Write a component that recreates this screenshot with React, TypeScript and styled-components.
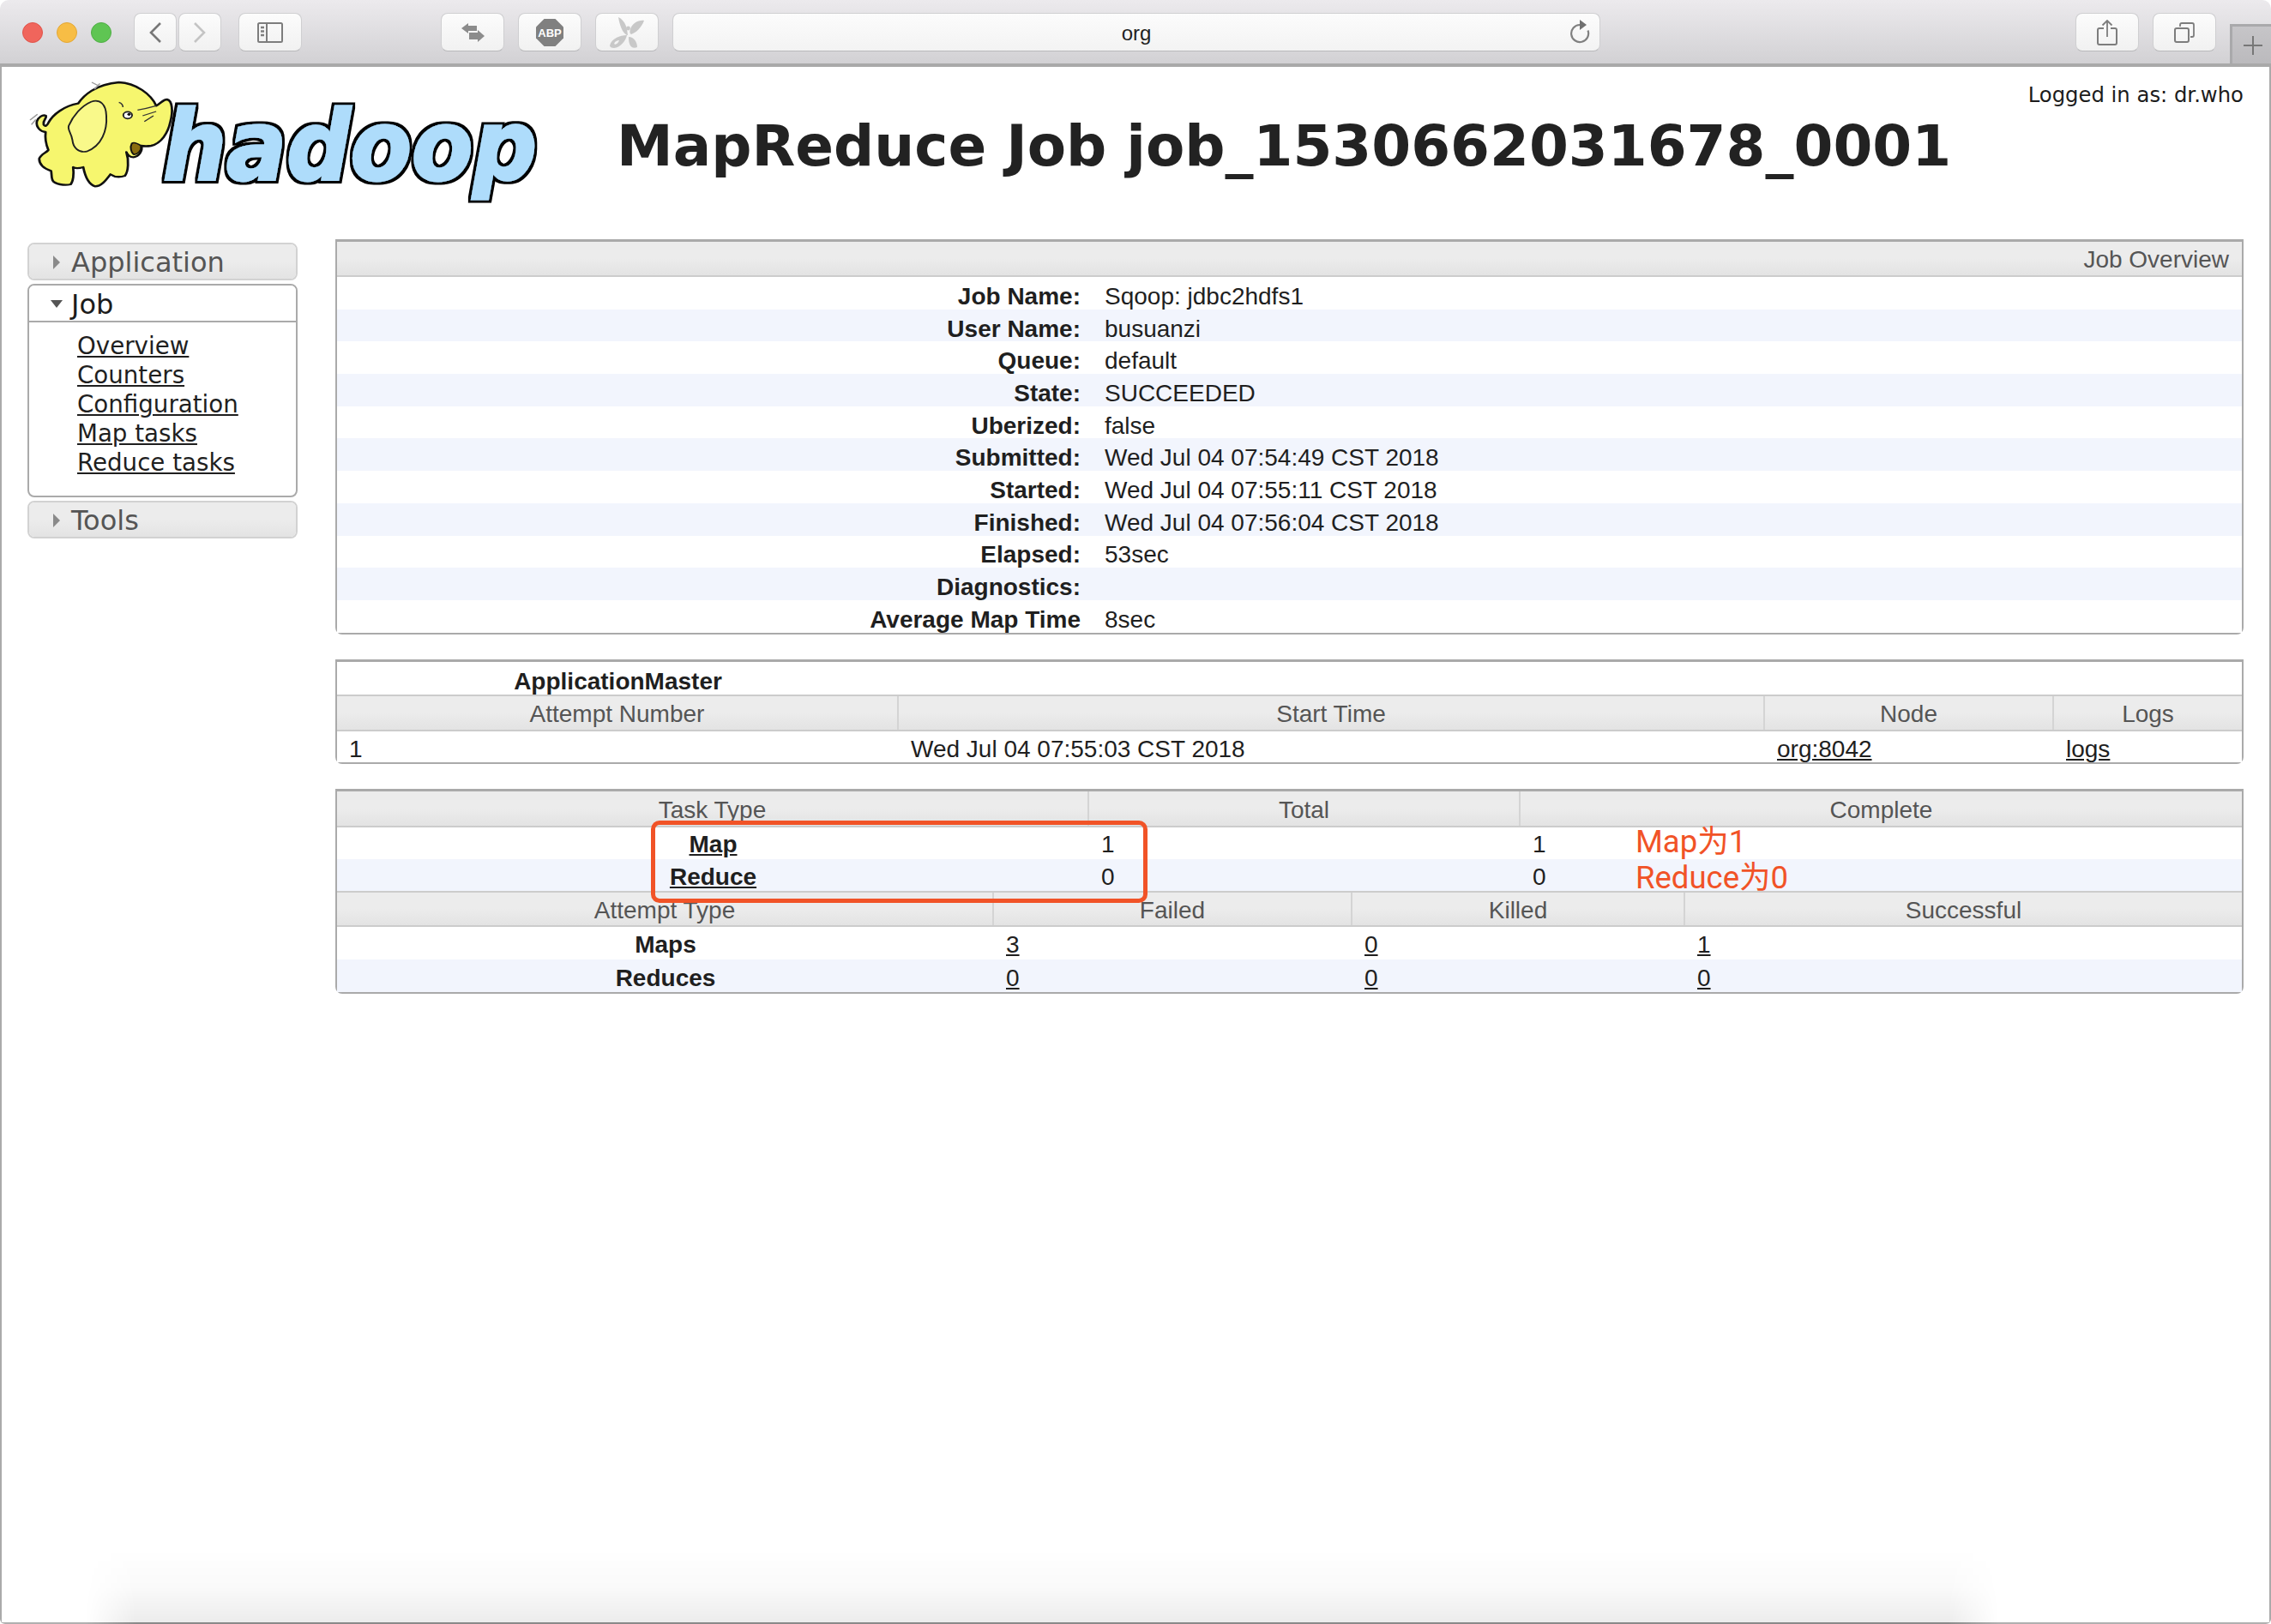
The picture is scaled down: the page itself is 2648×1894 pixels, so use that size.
import React from "react";
import styled, { createGlobalStyle } from "styled-components";

const Global = createGlobalStyle`
  html, body { margin: 0; padding: 0; background: #fff; }
  body { font-family: "Liberation Sans", Arial, sans-serif; font-size: 28px; color: #1f1f1f; }
  a { color: inherit; }
`;

const Win = styled.div`
  position: relative;
  width: 2648px;
  height: 1894px;
  overflow: hidden;
  display: flex;
  flex-direction: column;
  border-radius: 10px 10px 6px 6px;
`;

const Toolbar = styled.header`
  box-sizing: border-box;
  height: 78px;
  flex: none;
  display: flex;
  align-items: flex-start;
  padding: 15px 0 0 26px;
  background: linear-gradient(#eceaed, #d2d1d4);
  border-bottom: 4px solid #a9a9a9;
`;

const Lights = styled.div`
  display: flex;
  gap: 16px;
  margin: 11px 26px 0 0;
`;

const Light = styled.span<{ $c: string; $b: string }>`
  box-sizing: border-box;
  width: 24px;
  height: 24px;
  border-radius: 50%;
  background: ${(p) => p.$c};
  border: 1px solid ${(p) => p.$b};
`;

const ToolGroup = styled.div<{ $gap: number; $after: number }>`
  display: flex;
  gap: ${(p) => p.$gap}px;
  margin-right: ${(p) => p.$after}px;
`;

const ToolButton = styled.div<{ $w?: number }>`
  box-sizing: border-box;
  width: ${(p) => p.$w ?? 74}px;
  height: 45px;
  display: flex;
  align-items: center;
  justify-content: center;
  background: linear-gradient(#fcfcfc, #f1f1f1);
  border: 1px solid #cfcfd1;
  border-bottom-color: #b9b9bb;
  border-radius: 8px;
`;

const Address = styled.div`
  position: relative;
  box-sizing: border-box;
  width: 1082px;
  height: 45px;
  margin-right: 554px;
  padding-top: 2px;
  display: flex;
  align-items: center;
  justify-content: center;
  background: linear-gradient(#fcfcfc, #f3f3f3);
  border: 1px solid #cfcfd1;
  border-bottom-color: #b9b9bb;
  border-radius: 8px;
  font-size: 24px;
  color: #222;
`;

const Reload = styled.svg`
  position: absolute;
  right: 10px;
  top: 7px;
`;

const PlusTab = styled.div`
  box-sizing: border-box;
  width: 48px;
  height: 46px;
  margin: 13px 0 0 16px;
  padding-left: 2px;
  display: flex;
  align-items: center;
  justify-content: center;
  background: linear-gradient(#c6c5c8, #bbbabd);
  border: solid #a9a9ab;
  border-width: 3px 0 0 3px;
`;

const Page = styled.main`
  flex: 1;
  box-sizing: border-box;
  display: flex;
  flex-direction: column;
  border-left: 2px solid #aaa;
  border-right: 2px solid #aaa;
  border-bottom: 2px solid #b0b0b0;
  padding-right: 30px;
`;

const Masthead = styled.div`
  height: 201px;
  flex: none;
  display: flex;
  align-items: flex-start;
`;

const Logo = styled.svg`
  flex: none;
  margin: 2px 0 0 18px;
  overflow: visible;
`;

const Title = styled.h1`
  flex: none;
  margin: 53px 0 0 79px;
  font: 700 66px/1.2 "DejaVu Sans", Verdana, sans-serif;
  color: #222;
  white-space: nowrap;
`;

const Logged = styled.div`
  margin: 18px 0 0 auto;
  font: 400 24.3px/1.2 "DejaVu Sans", Verdana, sans-serif;
  color: #1c1c1c;
  white-space: nowrap;
`;

const Body = styled.div`
  display: flex;
  align-items: flex-start;
  gap: 44px;
  padding-left: 30px;
`;

const Sidebar = styled.nav`
  width: 315px;
  flex: none;
  display: flex;
  flex-direction: column;
  gap: 4px;
  padding-top: 4px;
  font-family: "DejaVu Sans", Verdana, sans-serif;
`;

const Accordion = styled.section<{ $open?: boolean }>`
  box-sizing: border-box;
  border: 2px solid ${(p) => (p.$open ? "#aaa" : "#d2d2d2")};
  border-radius: 8px;
  overflow: hidden;
`;

const AccordionHead = styled.div<{ $open?: boolean }>`
  box-sizing: border-box;
  height: ${(p) => (p.$open ? 43 : 40)}px;
  display: flex;
  align-items: center;
  gap: 7px;
  padding: 2px 0 0 22px;
  font-size: 32px;
  color: ${(p) => (p.$open ? "#1c1c1c" : "#555")};
  background: ${(p) => (p.$open ? "#fff" : "linear-gradient(#ececec 50%, #e3e3e3)")};
  border-bottom: ${(p) => (p.$open ? "2px solid #aaa" : "0")};
`;

const ArrowSlot = styled.span`
  width: 20px;
  display: flex;
  justify-content: center;
`;

const ArrowRight = styled.i`
  width: 0;
  height: 0;
  border-style: solid;
  border-width: 8px 0 8px 8px;
  border-color: transparent transparent transparent #8a8a8a;
`;

const ArrowDown = styled.i`
  width: 0;
  height: 0;
  border-style: solid;
  border-width: 9px 7px 0 7px;
  border-color: #555 transparent transparent transparent;
`;

const NavList = styled.div`
  display: flex;
  flex-direction: column;
  padding: 11px 0 21px 56px;
  font-size: 27.7px;
  line-height: 34px;
`;

const Content = styled.div`
  flex: 1;
  display: flex;
  flex-direction: column;
  gap: 29px;
  min-width: 0;
`;

const Panel = styled.section`
  position: relative;
  box-sizing: border-box;
  border: 2px solid #aaa;
  border-top-width: 3px;
  border-radius: 0 0 8px 8px;
`;

const HeadBar = styled.div`
  box-sizing: border-box;
  height: 41px;
  padding: 3px 15px 0 0;
  display: flex;
  align-items: center;
  justify-content: flex-end;
  color: #555;
  background: linear-gradient(#ececec 50%, #e3e3e3);
  border-bottom: 2px solid #ccc;
`;

const Row = styled.div<{ $cols: string; $alt?: boolean; $h?: number; $nudge?: number }>`
  display: grid;
  grid-template-columns: ${(p) => p.$cols};
  height: ${(p) => p.$h ?? 37.7}px;
  align-items: center;
  background: ${(p) => (p.$alt ? "#f2f5fd" : "#fff")};
  & > div { padding-top: ${(p) => p.$nudge ?? 5}px; }
`;

const HeadRow = styled.div<{ $cols: string; $h: number; $top?: boolean }>`
  box-sizing: border-box;
  display: grid;
  grid-template-columns: ${(p) => p.$cols};
  height: ${(p) => p.$h}px;
  background: linear-gradient(#ececec 50%, #e3e3e3);
  border-bottom: 2px solid #ccc;
  border-top: ${(p) => (p.$top ? "2px solid #ccc" : "0")};
  color: #555;
`;

const HeadCell = styled.div`
  display: flex;
  align-items: center;
  justify-content: center;
  padding-top: 4px;
  border-right: 2px solid #d4d4d4;
  &:last-child { border-right: 0; }
`;

const Label = styled.div`
  font-weight: 700;
  text-align: right;
  padding-right: 14px;
  line-height: 1;
`;

const Value = styled.div`
  padding-left: 14px;
  line-height: 1;
  white-space: nowrap;
`;

const Center = styled.div`
  font-weight: 700;
  text-align: center;
  line-height: 1;
`;

const BoldLink = styled.a`
  font-weight: 700;
`;

const RedBox = styled.div`
  position: absolute;
  left: 366px;
  top: 34px;
  box-sizing: border-box;
  width: 579px;
  height: 96px;
  border: 5px solid #f15327;
  border-radius: 10px;
`;

const Note = styled.span<{ $top: number }>`
  position: absolute;
  left: 1514px;
  top: ${(p) => p.$top}px;
  font: 400 36.5px/1 Roboto, "Noto Sans CJK SC", sans-serif;
  color: #f15327;
  white-space: nowrap;
`;

const BottomShade = styled.div`
  position: absolute;
  left: 100px;
  right: 318px;
  bottom: 0;
  height: 87px;
  background: linear-gradient(
    rgba(0, 0, 0, 0),
    rgba(0, 0, 0, 0.02) 50%,
    rgba(0, 0, 0, 0.075) calc(100% - 2px),
    #8a8a8a calc(100% - 2px)
  );
  mask-image: linear-gradient(to right, transparent, #000 58px, #000 calc(100% - 58px), transparent);
  pointer-events: none;
`;

const ICON = "#7d7d7d";

const HadoopLogo = () => (
  <Logo width={620} height={170} viewBox="0 0 1568 510" preserveAspectRatio="none" role="img" aria-label="hadoop">
    <defs>
      <filter id="logoOutline" x="-5%" y="-10%" width="110%" height="120%">
        <feMorphology in="SourceAlpha" operator="dilate" radius="9" result="fat" />
        <feFlood floodColor="#000" />
        <feComposite in2="fat" operator="in" result="edge" />
        <feMerge>
          <feMergeNode in="edge" />
          <feMergeNode in="SourceGraphic" />
        </feMerge>
      </filter>
    </defs>
    <text
      transform="translate(430 386) scale(.785 1)"
      fontFamily='"DejaVu Sans", sans-serif'
      fontWeight={700}
      fontStyle="oblique"
      fontSize={335}
      fill="#aedcfb"
      stroke="#aedcfb"
      strokeWidth={9}
      strokeLinejoin="miter"
      filter="url(#logoOutline)"
    >
      hadoop
    </text>
    <path
      d="M300 48 C350 50 395 90 410 130 C420 125 430 108 442 108 C458 112 460 150 452 185 C445 225 425 262 395 270 C385 272 375 272 365 270 C372 285 360 308 343 310 C332 310 325 300 322 292 C330 320 328 360 318 375 C300 382 285 378 275 370 C265 385 250 412 230 412 C210 405 200 375 195 345 C180 350 172 350 165 345 C168 370 165 395 158 405 C140 410 110 405 104 390 C100 375 102 365 100 358 C80 350 65 335 65 315 C70 300 85 295 92 285 C85 265 82 240 84 222 C70 222 55 205 58 185 C62 170 75 160 85 165 C88 175 75 180 78 195 C82 205 88 200 92 190 C105 160 140 130 180 122 C195 95 230 55 300 48 Z"
      fill="#f6f66e"
      stroke="#111"
      strokeWidth={7}
      strokeLinejoin="round"
    />
    <path
      d="M218 116 C245 105 262 125 263 165 C266 215 250 270 205 290 C180 296 165 275 163 250 C160 225 148 215 152 200 C165 165 190 130 218 116 Z"
      fill="#f9f98a"
      stroke="#222"
      strokeWidth={5}
    />
    <ellipse cx={326} cy={163} rx={13} ry={12} fill="#fff" stroke="#222" strokeWidth={5} />
    <circle cx={330} cy={160} r={5} fill="#111" />
    <path d="M300 118 C310 122 312 128 312 135 M355 145 C380 140 395 135 410 130 M370 165 L410 150 M375 185 L402 165" fill="none" stroke="#333" strokeWidth={4} />
    <path d="M338 262 C345 255 355 262 365 270 C368 285 355 302 343 300 C336 292 332 275 338 262 Z" fill="#8a6d10" stroke="#111" strokeWidth={5} />
    <path d="M220 48 L240 60 M228 72 L244 52 M38 180 L60 160 M42 196 L55 178" fill="none" stroke="#999" strokeWidth={4} />
  </Logo>
);

const Back = () => (
  <svg width={16} height={24} viewBox="0 0 16 24"><path d="M14 1 L3 12 L14 23" fill="none" stroke="#777" strokeWidth={2.6} /></svg>
);
const Forward = () => (
  <svg width={16} height={24} viewBox="0 0 16 24"><path d="M2 1 L13 12 L2 23" fill="none" stroke="#c4c4c4" strokeWidth={2.6} /></svg>
);
const SidebarIcon = () => (
  <svg width={30} height={24} viewBox="0 0 30 24">
    <rect x={1} y={1} width={28} height={22} rx={1.5} fill="none" stroke={ICON} strokeWidth={2} />
    <path d="M11 1 V23" stroke={ICON} strokeWidth={2} />
    <path d="M4 6 H8 M4 10.5 H8 M4 15 H8" stroke={ICON} strokeWidth={2.4} />
  </svg>
);
const Swap = () => (
  <svg width={27} height={22} viewBox="0 0 27 22">
    <path d="M0 6 L8 0 V3 H18 V9 H8 V12 Z" fill="#8c8c8c" />
    <path d="M27 15 L19 8 V11 H9 V19 H19 V22 Z" fill="#8c8c8c" />
  </svg>
);
const Abp = () => (
  <svg width={32} height={32} viewBox="0 0 32 32">
    <path d="M9.5 0 H22.5 L32 9.5 V22.5 L22.5 32 H9.5 L0 22.5 V9.5 Z" fill="#808080" />
    <text x={16} y={20.8} textAnchor="middle" fontFamily='"Liberation Sans", sans-serif' fontWeight={700} fontSize={13} fill="#fff">ABP</text>
  </svg>
);
const Butterfly = () => (
  <svg width={40} height={38} viewBox="0 0 40 38" fill="#c8c8c8">
    <path d="M10 1 C16 4 19 10 20 15 L21 22 C17 22 12 14 10 1 Z" />
    <path d="M40 5 C34 4 26 8 24 15 C23 18 23 20 25 21 C31 19 37 13 40 5 Z" />
    <circle cx={21.5} cy={14} r={2.4} />
    <path fillRule="evenodd" d="M0 34 C2 26 12 22 20 22 C19 28 12 37 5 37 C2 37 0 36 0 34 Z M5 32 C6 29 9 28 11 28 C10 31 7 34 5 32 Z" />
    <path d="M22 24 C28 24 32 30 32 36 C28 38 24 36 23 32 C22 29 22 26 22 24 Z" />
  </svg>
);
const ReloadIcon = () => (
  <Reload width={24} height={28} viewBox="0 0 24 28">
    <path d="M11 6 A10 10 0 1 0 20.5 12.5" fill="none" stroke="#808080" strokeWidth={2.2} />
    <path d="M11 0 L19 6 L11 12 Z" fill="#707070" />
  </Reload>
);
const Share = () => (
  <svg width={24} height={30} viewBox="0 0 24 30">
    <path d="M8 10 H3 Q1 10 1 12 V27 Q1 29 3 29 H21 Q23 29 23 27 V12 Q23 10 21 10 H16" fill="none" stroke={ICON} strokeWidth={2} />
    <path d="M12 1 V20 M6.5 6.5 L12 1 L17.5 6.5" fill="none" stroke={ICON} strokeWidth={1.8} />
  </svg>
);
const Tabs = () => (
  <svg width={24} height={24} viewBox="0 0 24 24">
    <rect x={1} y={7} width={16} height={16} rx={2} fill="none" stroke={ICON} strokeWidth={2} />
    <path d="M7 5 V3 Q7 1 9 1 H21 Q23 1 23 3 V15 Q23 17 21 17 H19" fill="none" stroke={ICON} strokeWidth={1.8} />
  </svg>
);
const Plus = () => (
  <svg width={22} height={22} viewBox="0 0 22 22"><path d="M11 0 V22 M0 11 H22" stroke="#777" strokeWidth={2} /></svg>
);

const overview: [string, string][] = [
  ["Job Name:", "Sqoop: jdbc2hdfs1"],
  ["User Name:", "busuanzi"],
  ["Queue:", "default"],
  ["State:", "SUCCEEDED"],
  ["Uberized:", "false"],
  ["Submitted:", "Wed Jul 04 07:54:49 CST 2018"],
  ["Started:", "Wed Jul 04 07:55:11 CST 2018"],
  ["Finished:", "Wed Jul 04 07:56:04 CST 2018"],
  ["Elapsed:", "53sec"],
  ["Diagnostics:", ""],
  ["Average Map Time", "8sec"],
];

const OV = "881px 1fr";
const AM = "655px 1010px 337px 1fr";
const TT = "877px 503px 1fr";
const AT = "766px 418px 388px 1fr";

export default function App() {
  return (
    <Win>
      <Global />
      <Toolbar>
        <Lights>
          <Light $c="#f0655c" $b="#e0534a" />
          <Light $c="#f7bd45" $b="#e3a735" />
          <Light $c="#5fc553" $b="#50ae45" />
        </Lights>
        <ToolGroup $gap={2} $after={20}>
          <ToolButton $w={50}><Back /></ToolButton>
          <ToolButton $w={50}><Forward /></ToolButton>
        </ToolGroup>
        <ToolGroup $gap={0} $after={162}>
          <ToolButton><SidebarIcon /></ToolButton>
        </ToolGroup>
        <ToolGroup $gap={16} $after={16}>
          <ToolButton><Swap /></ToolButton>
          <ToolButton><Abp /></ToolButton>
          <ToolButton><Butterfly /></ToolButton>
        </ToolGroup>
        <Address>org<ReloadIcon /></Address>
        <ToolGroup $gap={16} $after={0}>
          <ToolButton><Share /></ToolButton>
          <ToolButton><Tabs /></ToolButton>
        </ToolGroup>
        <PlusTab><Plus /></PlusTab>
      </Toolbar>
      <Page>
        <Masthead>
          <HadoopLogo />
          <Title>MapReduce Job job_1530662031678_0001</Title>
          <Logged>Logged in as: dr.who</Logged>
        </Masthead>
        <Body>
          <Sidebar>
            <Accordion>
              <AccordionHead><ArrowSlot><ArrowRight /></ArrowSlot>Application</AccordionHead>
            </Accordion>
            <Accordion $open>
              <AccordionHead $open><ArrowSlot><ArrowDown /></ArrowSlot>Job</AccordionHead>
              <NavList>
                <div><a href="#">Overview</a></div>
                <div><a href="#">Counters</a></div>
                <div><a href="#">Configuration</a></div>
                <div><a href="#">Map tasks</a></div>
                <div><a href="#">Reduce tasks</a></div>
              </NavList>
            </Accordion>
            <Accordion>
              <AccordionHead><ArrowSlot><ArrowRight /></ArrowSlot>Tools</AccordionHead>
            </Accordion>
          </Sidebar>
          <Content>
            <Panel>
              <HeadBar>Job Overview</HeadBar>
              {overview.map(([k, v], i) => (
                <Row key={k} $cols={OV} $alt={i % 2 === 1} $nudge={8}>
                  <Label>{k}</Label>
                  <Value>{v}</Value>
                </Row>
              ))}
            </Panel>
            <Panel>
              <Row $cols={AM} $h={38} $nudge={8}><Center>ApplicationMaster</Center></Row>
              <HeadRow $cols={AM} $h={43} $top>
                <HeadCell>Attempt Number</HeadCell>
                <HeadCell>Start Time</HeadCell>
                <HeadCell>Node</HeadCell>
                <HeadCell>Logs</HeadCell>
              </HeadRow>
              <Row $cols={AM} $h={36} $nudge={6}>
                <Value>1</Value>
                <Value>Wed Jul 04 07:55:03 CST 2018</Value>
                <Value><a href="#">org:8042</a></Value>
                <Value><a href="#">logs</a></Value>
              </Row>
            </Panel>
            <Panel>
              <HeadRow $cols={TT} $h={42}>
                <HeadCell>Task Type</HeadCell>
                <HeadCell>Total</HeadCell>
                <HeadCell>Complete</HeadCell>
              </HeadRow>
              <Row $cols={TT} $h={37} $nudge={3}>
                <Center><BoldLink href="#">Map</BoldLink></Center>
                <Value>1</Value>
                <Value>1</Value>
              </Row>
              <Row $cols={TT} $h={37} $alt $nudge={6}>
                <Center><BoldLink href="#">Reduce</BoldLink></Center>
                <Value>0</Value>
                <Value>0</Value>
              </Row>
              <HeadRow $cols={AT} $h={42} $top>
                <HeadCell>Attempt Type</HeadCell>
                <HeadCell>Failed</HeadCell>
                <HeadCell>Killed</HeadCell>
                <HeadCell>Successful</HeadCell>
              </HeadRow>
              <Row $cols={AT} $h={38}>
                <Center>Maps</Center>
                <Value><a href="#">3</a></Value>
                <Value><a href="#">0</a></Value>
                <Value><a href="#">1</a></Value>
              </Row>
              <Row $cols={AT} $h={38} $alt $nudge={6}>
                <Center>Reduces</Center>
                <Value><a href="#">0</a></Value>
                <Value><a href="#">0</a></Value>
                <Value><a href="#">0</a></Value>
              </Row>
              <RedBox />
              <Note $top={41}>Map为1</Note>
              <Note $top={83}>Reduce为0</Note>
            </Panel>
          </Content>
        </Body>
      </Page>
      <BottomShade />
    </Win>
  );
}
